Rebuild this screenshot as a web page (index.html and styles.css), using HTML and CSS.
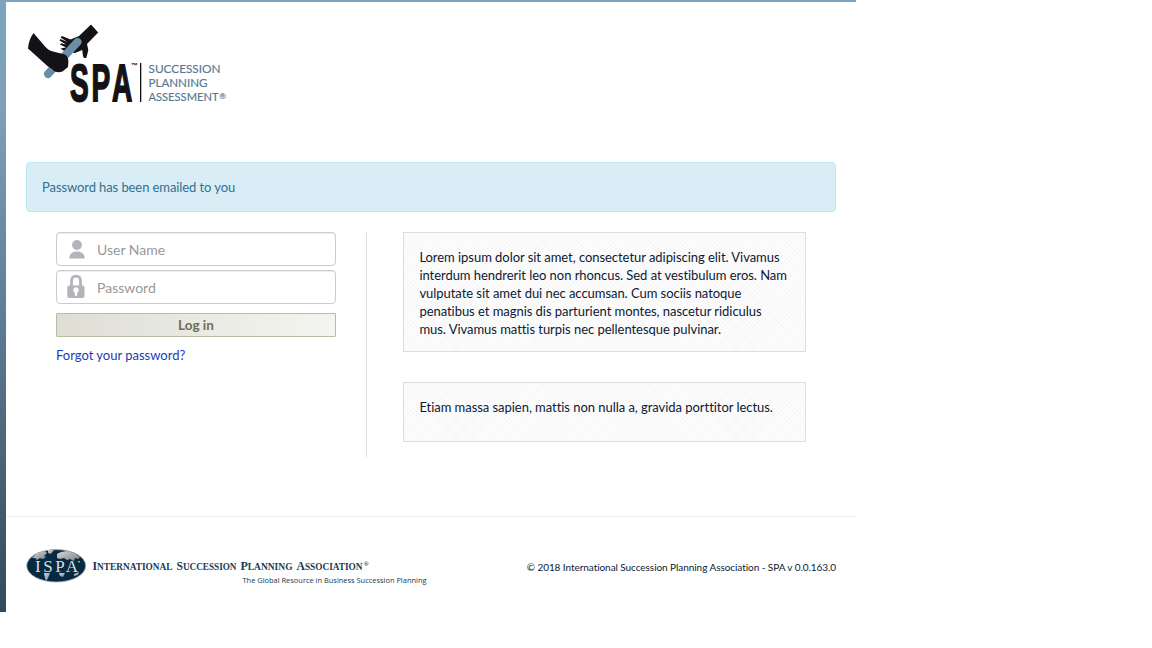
FILE: index.html
```html
<!DOCTYPE html>
<html lang="en">
<head>
<meta charset="utf-8">
<title>Succession Planning Assessment</title>
<link rel="stylesheet" href="styles.css">
</head>
<body>
<div class="shell">
  <div class="page">
    <header class="header">
      <svg class="logo" width="204" height="84" viewBox="24 20 204 84" role="img" aria-label="Succession Planning Assessment">
        <g fill="#141216">
          <path d="M91 24.500 98.200 32.500 87 44 88.300 50 86.500 57.500Q84 59.500 83 56L82.200 50 75 53 65 51.500 60.500 48.500 66 47.500 60 44.500 61 43.300 66 44.500 59.500 40.500 60.500 39 67.500 42 60.500 37.500 62 36 70.500 39.500 79 36Z"/>
        </g>
        <path d="M48 74 77.500 42" stroke="#6a8ea6" stroke-width="8" stroke-linecap="round"/>
        <path fill="#141216" d="M33.500 33 45 46.500Q49 51 55 52L65 54.500Q69 57 68.300 63L68 67 62.500 71.500Q56 74 52 69L48 66.500 28 48.500Q28.500 40 33.500 33Z"/>
        <text class="logo-spa" transform="translate(70 101) scale(.55 1)" x="0 39 76.500">SPA</text>
        <text class="logo-tm" x="131" y="68">™</text>
        <rect x="140" y="63" width="1.300" height="39" fill="#141216"/>
        <g class="logo-name">
          <text x="148.500" y="73" textLength="72" lengthAdjust="spacingAndGlyphs">SUCCESSION</text>
          <text x="148.500" y="87" textLength="59" lengthAdjust="spacingAndGlyphs">PLANNING</text>
          <text x="148.500" y="101" textLength="70" lengthAdjust="spacingAndGlyphs">ASSESSMENT</text>
          <text class="logo-reg" x="219.300" y="99">®</text>
        </g>
      </svg>
    </header>

    <div class="alert">Password has been emailed to you</div>

    <main class="columns">
      <form class="login">
        <label class="field">
          <svg class="field-icon" width="18" height="26" viewBox="0 0 18 26"><circle cx="10" cy="9" r="4.900" fill="#b3b3bb"/><path d="M2.300 22.500Q2.500 15.500 10 15.500T17.700 22.500Z" fill="#b3b3bb"/></svg>
          <input class="field-input" type="text" placeholder="User Name">
        </label>
        <label class="field">
          <svg class="field-icon" width="18" height="26" viewBox="0 0 18 26"><path d="M4.500 13V7Q4.500 2.200 9 2.200T13.500 7V13" fill="none" stroke="#b3b3bb" stroke-width="2.800"/><rect x=".3" y="11.500" width="17.200" height="12.500" rx="2" fill="#b3b3bb"/><path d="M7.500 18.500A2.800 2.800 0 1 1 10.500 18.500L9.800 22H8.200Z" fill="#fff"/></svg>
          <input class="field-input" type="password" placeholder="Password">
        </label>
        <button class="submit" type="button">Log in</button>
        <a class="forgot" href="#">Forgot your password?</a>
      </form>
      <section class="notes">
        <div class="note note-long">Lorem ipsum dolor sit amet, consectetur adipiscing elit. Vivamus interdum hendrerit leo non rhoncus. Sed at vestibulum eros. Nam vulputate sit amet dui nec accumsan. Cum sociis natoque penatibus et magnis dis parturient montes, nascetur ridiculus mus. Vivamus mattis turpis nec pellentesque pulvinar.</div>
        <div class="note note-short">Etiam massa sapien, mattis non nulla a, gravida porttitor lectus.</div>
      </section>
    </main>

    <footer class="footer">
      <svg class="ispa" width="404" height="40" viewBox="26 547 404 40" role="img" aria-label="International Succession Planning Association">
        <defs>
          <linearGradient id="land" x1="0" y1="0" x2="1" y2="1"><stop offset="0" stop-color="#d5d8db"/><stop offset="1" stop-color="#7b8187"/></linearGradient>
        </defs>
        <ellipse cx="56.200" cy="565.800" rx="29.500" ry="16.200" fill="#082a41" stroke="#a4aeb6" stroke-width=".8"/>
        <g fill="url(#land)">
          <path d="M32 558 37 553 45 551 47 553 44 556 46 557 43 559 40 558 37 560 35 558Z"/>
          <path d="M48 550 54 550 51 554 48 553Z"/>
          <path d="M57 554 61 552 67 551 74 553 80 557 78 559 75 558 74 561 70 559 67 560 64 558 60 559 57 558Z"/>
          <path d="M44 573 50 573 48 578 46 581 45 578Z"/>
          <path d="M59 573 65 573 63 577 60 576Z"/>
          <path d="M74 574 79 572 78 575 74 576Z"/>
        </g>
        <text class="ispa-mark" x="35" y="571.500" textLength="43" lengthAdjust="spacing">ISPA</text>
        <circle cx="79" cy="561.700" r=".8" fill="#fff"/>
        <g class="ispa-name">
          <text x="92.500" y="570" textLength="80" lengthAdjust="spacingAndGlyphs">I<tspan class="small-cap">NTERNATIONAL</tspan></text>
          <text x="176.500" y="570" textLength="60" lengthAdjust="spacingAndGlyphs">S<tspan class="small-cap">UCCESSION</tspan></text>
          <text x="240.500" y="570" textLength="52" lengthAdjust="spacingAndGlyphs">P<tspan class="small-cap">LANNING</tspan></text>
          <text x="296.500" y="570" textLength="66" lengthAdjust="spacingAndGlyphs">A<tspan class="small-cap">SSOCIATION</tspan></text>
          <text class="ispa-reg" x="363.500" y="566">®</text>
        </g>
        <text class="ispa-tag" x="242.500" y="583" textLength="184" lengthAdjust="spacingAndGlyphs">The Global Resource in Business Succession Planning</text>
      </svg>
      <div class="copyright">© 2018 International Succession Planning Association - SPA v 0.0.163.0</div>
    </footer>
  </div>
</div>
</body>
</html>
```
FILE: styles.css
```css
* {
  box-sizing: border-box;
}

body {
  margin: 0;
  background: #fff;
  color: #0c1a33;
  font: 13px/18px Lato, "Liberation Sans", sans-serif;
  font-variant-ligatures: none;
}

.shell {
  width: 856px;
  height: 612px;
  padding: 2px 0 0 6px;
  background: linear-gradient(#7ca3bf 0, #7ca0bb 110px, #34495c 612px);
}

.page {
  display: flex;
  flex-direction: column;
  height: 610px;
  background: #fff;
}

.header {
  height: 160px;
  padding: 18px 18px 0;
}

.logo,
.ispa {
  display: block;
}

.logo-spa {
  font: bold 51px "Liberation Sans", sans-serif;
  fill: #141216;
  stroke: #141216;
  stroke-width: 1.8px;
}

.logo-tm {
  font: bold 7px "Liberation Sans", sans-serif;
  fill: #141216;
}

.logo-name {
  font: 12px Lato, sans-serif;
  fill: #55778f;
  stroke: #55778f;
  stroke-width: 0.15px;
}

.logo-reg {
  font-size: 8px;
}

.alert {
  height: 50px;
  margin: 0 20px;
  padding: 15px;
  border: 1px solid #bce8f1;
  border-radius: 4px;
  background: #d9edf7;
  color: #31708f;
  letter-spacing: -0.09px;
}

.columns {
  display: flex;
  height: 225px;
  margin: 20px 50px 0;
}

.login {
  display: flex;
  flex-direction: column;
  width: 311px;
  padding-right: 30px;
  border-right: 1px solid #ddd;
}

.field {
  display: flex;
  align-items: center;
  height: 34px;
  margin-bottom: 4px;
  padding: 0 10px;
  border: 1px solid #ccc;
  border-radius: 4px;
  background: #fff;
  box-shadow: inset 0 1px 1px rgba(0, 0, 0, 0.075);
}

.field-icon {
  flex: none;
}

.field-input {
  flex: 1;
  min-width: 0;
  margin-left: 12px;
  padding: 2px 0 0;
  border: 0;
  outline: 0;
  background: transparent;
  font: 14px/20px Lato, sans-serif;
}

.field-input::placeholder {
  color: #999;
}

.submit {
  height: 24px;
  margin: 5px 0 9px;
  padding: 0;
  border: 1px solid #bcbca6;
  border-radius: 1px;
  background: linear-gradient(90deg, #deded5, #f4f5f0);
  color: #6d6d5b;
  font: bold 13.5px/20px Lato, sans-serif;
}

.forgot {
  align-self: flex-start;
  color: #1c3bb5;
  text-decoration: none;
}

.notes {
  display: flex;
  flex: 1;
  flex-direction: column;
  gap: 30px;
  padding-left: 36px;
}

.note {
  padding: 15px 17px 15px 15.4px;
  border: 1px solid #ddd;
  background-color: #fdfdfd;
  background-image:
    repeating-linear-gradient(45deg, transparent 0 2px, rgba(0, 0, 0, 0.014) 2px 3px),
    repeating-linear-gradient(-45deg, transparent 0 2px, rgba(0, 0, 0, 0.014) 2px 3px);
  letter-spacing: -0.045px;
}

.note-long {
  height: 120px;
}

.note-short {
  height: 60px;
}

.footer {
  display: flex;
  justify-content: space-between;
  margin-top: 59px;
  padding: 30px 20px 0;
  border-top: 1px solid #eee;
}

.ispa-mark {
  font: 17px "Liberation Serif", serif;
  fill: #d9dde0;
}

.ispa-name {
  font: bold 12px "Liberation Serif", serif;
  fill: #173a52;
}

.small-cap {
  font-size: 9.5px;
}

.ispa-reg {
  font-size: 7px;
}

.ispa-tag {
  font: 7px "Open Sans", sans-serif;
  fill: #173a52;
}

.copyright {
  padding-top: 11px;
  font-size: 10px;
  letter-spacing: -0.06px;
  white-space: nowrap;
}
```
